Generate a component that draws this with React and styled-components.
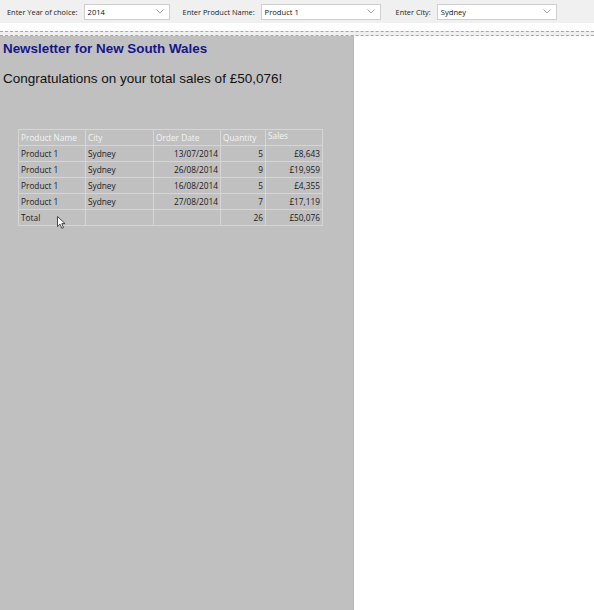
import React from 'react';
import styled, { createGlobalStyle } from 'styled-components';

// --- Dados ---

const filters = [
  { label: 'Enter Year of choice:', value: '2014', width: 86, gap: 13 },
  { label: 'Enter Product Name:', value: 'Product 1', width: 120, gap: 15 },
  { label: 'Enter City:', value: 'Sydney', width: 120, gap: 0 },
];

const rows = [
  ['Product 1', 'Sydney', '13/07/2014', '5', '£8,643'],
  ['Product 1', 'Sydney', '26/08/2014', '9', '£19,959'],
  ['Product 1', 'Sydney', '16/08/2014', '5', '£4,355'],
  ['Product 1', 'Sydney', '27/08/2014', '7', '£17,119'],
];

// largura de cada coluna, com borda e padding
const columns = [
  { name: 'Product Name', width: 67, align: 'left' },
  { name: 'City', width: 68, align: 'left' },
  { name: 'Order Date', width: 67, align: 'right' },
  { name: 'Quantity', width: 45, align: 'right' },
  { name: 'Sales', width: 57, align: 'right' },
];

// --- Styled Components ---

const GlobalStyle = createGlobalStyle`
  html, body {
    margin: 0;
    padding: 0;
    background: #ffffff;
  }
  #root {
    height: 610px;
  }
`;

const Page = styled.div`
  display: flex;
  flex-direction: column;
  height: 610px;
  width: 594px;
  overflow: hidden;
`;

const Toolbar = styled.div`
  display: flex;
  align-items: center;
  height: 23px;
  padding: 0 0 0 7px;
  background: #f0f0f0;
  font-family: 'Open Sans', 'Noto Sans', sans-serif;
  font-size: 7.4px;
  color: #222;
`;

const FilterGroup = styled.div`
  display: flex;
  align-items: center;
  margin-right: ${({ gap }) => gap}px;
`;

const FilterLabel = styled.span`
  margin-right: 6px;
  white-space: nowrap;
`;

const SelectBox = styled.div`
  display: flex;
  align-items: center;
  justify-content: space-between;
  box-sizing: border-box;
  width: ${({ w }) => w}px;
  height: 16px;
  padding: 0 5px 0 3px;
  background: #ffffff;
  border: 1px solid #cfcfcf;
  font-size: 7.6px;
  color: #111;
`;

const Splitter = styled.div`
  box-sizing: border-box;
  height: 5px;
  margin-top: 8px;
  background: #f0f0f0;
  border-top: 1px dashed #a8a8a8;
  border-bottom: 1px dashed #a8a8a8;
`;

const Body = styled.div`
  flex: 1;
  display: flex;
`;

const Report = styled.div`
  width: 354px;
  flex-shrink: 0;
  background: #c0c0c0;
  border-right: 1px solid #b6b6b6;
  padding: 5px 3px;
  box-sizing: border-box;
  font-family: 'Liberation Sans', Arial, sans-serif;
`;

const Title = styled.h1`
  margin: 0;
  font-size: 13.4px;
  font-weight: bold;
  color: #16168a;
`;

const Congrats = styled.p`
  margin: 15px 0 0;
  font-size: 13.5px;
  color: #111;
`;

const Table = styled.table`
  margin: 43px 0 0 15px;
  border-collapse: collapse;
  table-layout: fixed;
  font-family: 'Open Sans', 'Noto Sans', sans-serif;
  font-size: 8.3px;
`;

const Th = styled.th`
  width: ${({ w }) => w - 5}px;
  height: 15px;
  padding: 0 2px;
  border: 1px solid #d6d6d6;
  color: #f4f4f4;
  font-weight: normal;
  text-align: left;
  vertical-align: ${({ top }) => (top ? 'top' : 'middle')};
  white-space: nowrap;
  overflow: hidden;
`;

const Td = styled.td`
  height: 15px;
  padding: 0 2px;
  border: 1px solid #d6d6d6;
  color: #1a1a1a;
  text-align: ${({ align }) => align};
  white-space: nowrap;
  position: ${({ cursor }) => (cursor ? 'relative' : 'static')};
`;

const Cursor = styled.svg`
  position: absolute;
  left: 38px;
  top: 6px;
`;

function Chevron() {
  return (
    <svg width="8" height="5" viewBox="0 0 8 5">
      <path d="M0.5 0.5 L4 4 L7.5 0.5" fill="none" stroke="#8a8a8a" strokeWidth="0.8" />
    </svg>
  );
}

// --- Componente ---

export default function App() {
  return (
    <>
      <GlobalStyle />
      <Page>
        <Toolbar>
          {filters.map((f) => (
            <FilterGroup key={f.label} gap={f.gap}>
              <FilterLabel>{f.label}</FilterLabel>
              <SelectBox w={f.width}>
                <span>{f.value}</span>
                <Chevron />
              </SelectBox>
            </FilterGroup>
          ))}
        </Toolbar>
        <Splitter />
        <Body>
          <Report>
            <Title>Newsletter for New South Wales</Title>
            <Congrats>Congratulations on your total sales of £50,076!</Congrats>
            <Table>
              <thead>
                <tr>
                  {columns.map((c) => (
                    <Th key={c.name} w={c.width} top={c.name === 'Sales'}>
                      {c.name}
                    </Th>
                  ))}
                </tr>
              </thead>
              <tbody>
                {rows.map((r, i) => (
                  <tr key={i}>
                    {r.map((cell, j) => (
                      <Td key={j} align={columns[j].align}>
                        {cell}
                      </Td>
                    ))}
                  </tr>
                ))}
                <tr>
                  <Td align="left" cursor>
                    Total
                    <Cursor width="9" height="13" viewBox="0 0 9 13">
                      <path
                        d="M0.5 0.5 L0.5 10.5 L3 8.2 L4.8 12.3 L6.5 11.6 L4.8 7.6 L8 7.6 Z"
                        fill="#ffffff"
                        stroke="#222"
                        strokeWidth="0.8"
                      />
                    </Cursor>
                  </Td>
                  <Td />
                  <Td />
                  <Td align="right">26</Td>
                  <Td align="right">£50,076</Td>
                </tr>
              </tbody>
            </Table>
          </Report>
        </Body>
      </Page>
    </>
  );
}
